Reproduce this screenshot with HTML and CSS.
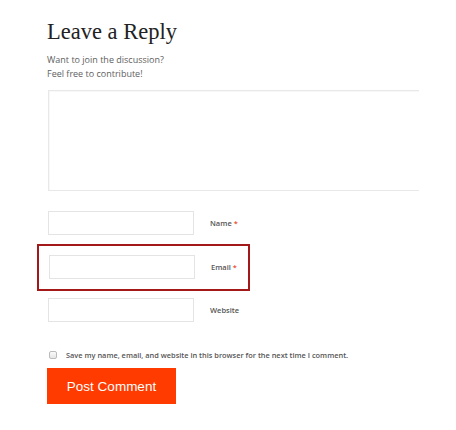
FILE: index.html
```html
<!DOCTYPE html>
<html>
<head>
<meta charset="utf-8">
<link rel="stylesheet" href="styles.css">
</head>
<body>
<div class="page">
  <h1 class="title">Leave a Reply</h1>
  <p class="intro">Want to join the discussion?<br>Feel free to contribute!</p>
  <textarea class="message"></textarea>
  <div class="field field-name">
    <input class="text-input" type="text">
    <label class="label">Name <span class="req">*</span></label>
  </div>
  <div class="field field-email">
    <input class="text-input" type="text">
    <label class="label">Email <span class="req">*</span></label>
  </div>
  <div class="field field-website">
    <input class="text-input" type="text">
    <label class="label">Website</label>
  </div>
  <div class="consent">
    <span class="checkbox"></span>
    <span class="consent-text">Save my name, email, and website in this browser for the next time I comment.</span>
  </div>
  <button class="submit">Post Comment</button>
</div>
</body>
</html>
```

FILE: styles.css
```css
html, body {
  margin: 0;
  padding: 0;
  background: #fff;
}

.page {
  padding: 19px 0 0 47px;
  font-family: "Open Sans", "Liberation Sans", sans-serif;
}

.title {
  margin: 0;
  font-family: "Liberation Serif", serif;
  font-weight: normal;
  font-size: 22.5px;
  line-height: 26px;
  color: #222;
}

.intro {
  margin: 8px 0 0 0;
  font-size: 9px;
  line-height: 14px;
  color: #5e5e5e;
}

.message {
  display: block;
  box-sizing: border-box;
  margin: 9px 0 0 1px;
  width: 371px;
  height: 101px;
  border: 1px solid #e8e8e8;
  border-right: none;
  box-shadow: inset 1px 1px 1px rgba(0,0,0,0.03);
  background: #fff;
  resize: none;
  padding: 0;
}

.field {
  display: flex;
  align-items: center;
  gap: 16px;
}

.field-name {
  margin-top: 20px;
}

.field-email {
  margin: 9px 0 0 -10px;
  width: 200px;
  padding: 9px 0 10px 9px;
  border: 2px solid #a3191a;
}

.field-website {
  margin-top: 7px;
}

.text-input {
  display: block;
  box-sizing: border-box;
  margin: 0 0 0 1px;
  width: 146px;
  height: 24px;
  border: 1px solid #e4e4e4;
  background: #fff;
  padding: 0;
}

.label {
  font-size: 7.5px;
  font-weight: 600;
  color: #555;
}

.req {
  color: #e8502a;
}

.consent {
  display: flex;
  align-items: center;
  gap: 9px;
  margin: 28px 0 0 2px;
}

.checkbox {
  display: block;
  box-sizing: border-box;
  width: 8px;
  height: 8px;
  border: 1px solid #bbb;
  border-radius: 2px;
  background: linear-gradient(#fafafa, #e6e6e6);
}

.consent-text {
  font-size: 7.4px;
  font-weight: 600;
  color: #555;
}

.submit {
  display: block;
  margin: 8px 0 0 0;
  width: 129px;
  height: 36px;
  border: none;
  background: #ff3b00;
  color: #fff;
  font-family: "Liberation Sans", Arial, sans-serif;
  font-size: 13.5px;
  padding: 0;
}
```
